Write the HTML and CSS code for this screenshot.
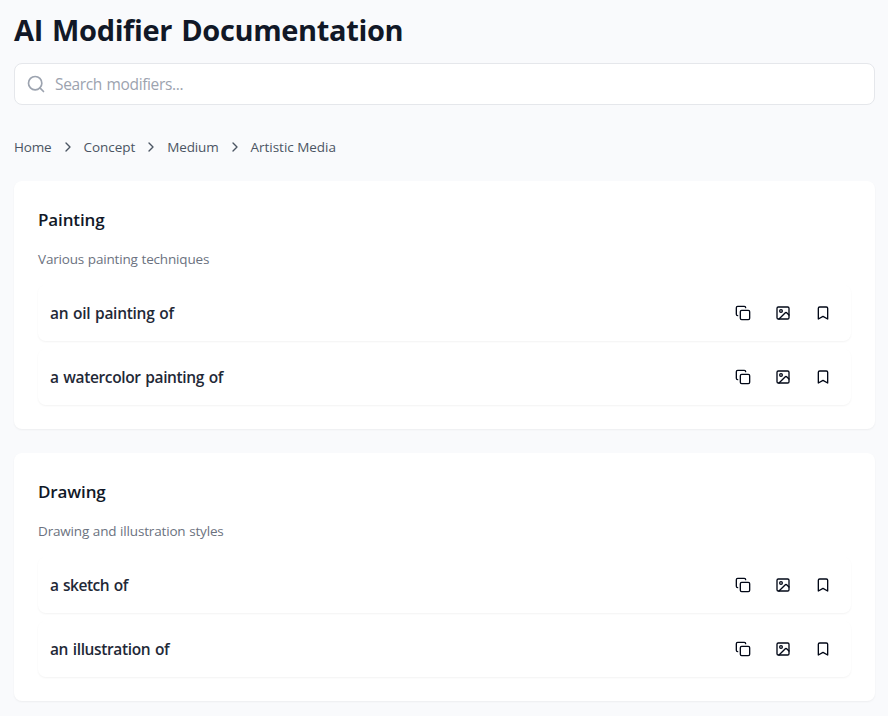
FILE: index.html
```html
<!DOCTYPE html>
<html lang="en">
<head>
<meta charset="utf-8">
<title>AI Modifier Documentation</title>
<link rel="stylesheet" href="styles.css">
</head>
<body>
<svg class="defs" aria-hidden="true">
  <symbol id="copy" viewBox="0 0 24 24"><rect width="14" height="14" x="8" y="8" rx="2"/><path d="M4 16c-1.1 0-2-.9-2-2V4c0-1.1.9-2 2-2h10c1.1 0 2 .9 2 2"/></symbol>
  <symbol id="image" viewBox="0 0 24 24"><rect width="18" height="18" x="3" y="3" rx="2"/><circle cx="9" cy="9" r="2"/><path d="m21 15-3.086-3.086a2 2 0 0 0-2.828 0L6 21"/></symbol>
  <symbol id="bookmark" viewBox="0 0 24 24"><path d="m19 21-7-4-7 4V5a2 2 0 0 1 2-2h10a2 2 0 0 1 2 2z"/></symbol>
  <symbol id="chevron" viewBox="0 0 24 24"><path d="m9 18 6-6-6-6"/></symbol>
  <symbol id="search" viewBox="0 0 24 24"><circle cx="11" cy="11" r="8"/><path d="m21 21-4.3-4.3"/></symbol>
</svg>
<main class="page">
  <h1>AI Modifier Documentation</h1>
  <div class="search"><svg class="search-icon"><use href="#search"/></svg><span>Search modifiers...</span></div>
  <nav class="crumbs">
    <a class="tight">Home</a><svg class="icon"><use href="#chevron"/></svg>
    <a>Concept</a><svg class="icon"><use href="#chevron"/></svg>
    <a class="tight">Medium</a><svg class="icon"><use href="#chevron"/></svg>
    <a>Artistic Media</a>
  </nav>
  <section class="card">
    <h2>Painting</h2>
    <p>Various painting techniques</p>
    <div class="row"><span class="name wide">an oil painting of</span><div class="actions"><svg class="icon"><use href="#copy"/></svg><svg class="icon"><use href="#image"/></svg><svg class="icon"><use href="#bookmark"/></svg></div></div>
    <div class="row"><span class="name">a watercolor painting of</span><div class="actions"><svg class="icon"><use href="#copy"/></svg><svg class="icon"><use href="#image"/></svg><svg class="icon"><use href="#bookmark"/></svg></div></div>
  </section>
  <section class="card">
    <h2>Drawing</h2>
    <p>Drawing and illustration styles</p>
    <div class="row"><span class="name tight">a sketch of</span><div class="actions"><svg class="icon"><use href="#copy"/></svg><svg class="icon"><use href="#image"/></svg><svg class="icon"><use href="#bookmark"/></svg></div></div>
    <div class="row"><span class="name">an illustration of</span><div class="actions"><svg class="icon"><use href="#copy"/></svg><svg class="icon"><use href="#image"/></svg><svg class="icon"><use href="#bookmark"/></svg></div></div>
  </section>
</main>
</body>
</html>
```
FILE: styles.css
```css
* { box-sizing: border-box; margin: 0; }
body { background: #f9fafc; font-family: "Open Sans", "Noto Sans", sans-serif; color: #111827; }
svg { fill: none; stroke: currentColor; stroke-width: 2; stroke-linecap: round; stroke-linejoin: round; flex: none; }
.defs { position: absolute; width: 0; height: 0; }
.icon { width: 16px; height: 16px; }
.page { padding: 12px 13px 14px 14px; }
h1 { font-size: 29px; line-height: 36px; font-weight: 700; letter-spacing: -0.36px; word-spacing: 2px; margin-bottom: 15px; white-space: nowrap; }
.search { height: 42px; border: 1px solid #e5e7eb; border-radius: 8px; background: #fff; display: flex; align-items: center; gap: 9px; padding-left: 11px; font-size: 15.5px; letter-spacing: -0.36px; word-spacing: 1px; color: #9ca3af; }
.search-icon { width: 20px; height: 20px; }
.crumbs { display: flex; align-items: center; gap: 8px; height: 20px; margin: 32px 0 24px; font-size: 13.5px; letter-spacing: -0.03px; color: #4b5563; white-space: nowrap; }
.crumbs a { line-height: 20px; }
.crumbs .tight { letter-spacing: -0.16px; }
.card { height: 248px; background: #fff; border-radius: 8px; padding: 24px; box-shadow: 0 1px 2px rgb(0 0 0 / 0.05); margin-bottom: 24px; }
h2 { font-size: 17px; line-height: 28px; font-weight: 600; letter-spacing: -0.12px; padding-top: 1px; margin-bottom: 15px; }
.card p { font-size: 13.5px; line-height: 20px; letter-spacing: -0.17px; word-spacing: 0.4px; color: #6b7280; margin-bottom: 16px; }
.row { height: 56px; border-radius: 8px; padding: 0 12px; display: flex; align-items: center; justify-content: space-between; box-shadow: 0 1px 2px rgb(0 0 0 / 0.05); margin-bottom: 8px; }
.name { font-size: 15.5px; font-weight: 600; letter-spacing: -0.37px; word-spacing: 1px; color: #1f2937; }
.name.wide { letter-spacing: -0.28px; }
.name.tight { letter-spacing: -0.48px; }
.actions { display: flex; gap: 24px; padding: 0 8px; color: #020817; }
```
